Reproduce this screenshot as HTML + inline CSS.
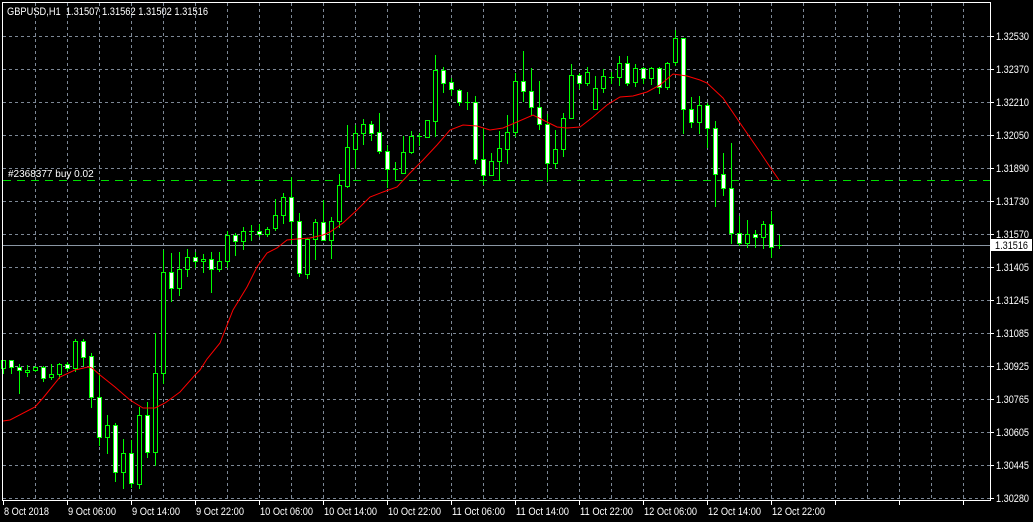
<!DOCTYPE html>
<html><head><meta charset="utf-8"><style>
html,body{margin:0;padding:0;background:#000;width:1033px;height:522px;overflow:hidden}
svg{position:absolute;left:0;top:0}
text{font-family:"Liberation Sans",sans-serif;font-size:11px;fill:#fff}
</style></head><body>
<svg id="s" width="1033" height="522" xmlns="http://www.w3.org/2000/svg" shape-rendering="crispEdges">
<g id="grid"></g>
<line x1="3" y1="180.5" x2="990" y2="180.5" stroke="#00e000" stroke-dasharray="8,6"/>
<text x="8" y="177" style="font-size:10px">#2368377 buy 0.02</text>
<line x1="3" y1="245.5" x2="990" y2="245.5" stroke="#8a96a3"/>
<g id="cand"></g>
<polyline id="ma" fill="none" stroke="#ff0000" stroke-width="1" shape-rendering="auto"/>
<line x1="2.5" y1="2" x2="2.5" y2="501" stroke="#fff"/>
<line x1="2" y1="2.5" x2="990" y2="2.5" stroke="#fff"/>
<line x1="990.5" y1="2" x2="990.5" y2="501" stroke="#fff"/>
<line x1="2" y1="500.5" x2="991" y2="500.5" stroke="#fff"/>
<g id="ticks"></g>
<text x="7" y="15" textLength="201" lengthAdjust="spacingAndGlyphs">GBPUSD,H1&#160; 1.31507 1.31562 1.31502 1.31516</text>
<g id="ra">
<text x="996" y="40">1.32530</text>
<text x="996" y="73">1.32370</text>
<text x="996" y="106">1.32210</text>
<text x="996" y="139">1.32050</text>
<text x="996" y="172">1.31890</text>
<text x="996" y="205">1.31730</text>
<text x="996" y="238">1.31570</text>
<rect x="991" y="239" width="41" height="12" fill="#fff"/>
<text x="995" y="249" style="fill:#000">1.31516</text>
<text x="996" y="271">1.31405</text>
<text x="996" y="304">1.31245</text>
<text x="996" y="337">1.31085</text>
<text x="996" y="370">1.30925</text>
<text x="996" y="403">1.30765</text>
<text x="996" y="436">1.30605</text>
<text x="996" y="469">1.30445</text>
<text x="996" y="502">1.30280</text>
</g>
<text x="4" y="515" textLength="45" lengthAdjust="spacingAndGlyphs">8 Oct 2018</text>
<text x="68" y="515" textLength="48" lengthAdjust="spacingAndGlyphs">9 Oct 06:00</text>
<text x="132" y="515" textLength="48" lengthAdjust="spacingAndGlyphs">9 Oct 14:00</text>
<text x="196" y="515" textLength="48" lengthAdjust="spacingAndGlyphs">9 Oct 22:00</text>
<text x="260" y="515" textLength="53" lengthAdjust="spacingAndGlyphs">10 Oct 06:00</text>
<text x="324" y="515" textLength="53" lengthAdjust="spacingAndGlyphs">10 Oct 14:00</text>
<text x="388" y="515" textLength="53" lengthAdjust="spacingAndGlyphs">10 Oct 22:00</text>
<text x="452" y="515" textLength="53" lengthAdjust="spacingAndGlyphs">11 Oct 06:00</text>
<text x="516" y="515" textLength="53" lengthAdjust="spacingAndGlyphs">11 Oct 14:00</text>
<text x="580" y="515" textLength="53" lengthAdjust="spacingAndGlyphs">11 Oct 22:00</text>
<text x="644" y="515" textLength="53" lengthAdjust="spacingAndGlyphs">12 Oct 06:00</text>
<text x="708" y="515" textLength="53" lengthAdjust="spacingAndGlyphs">12 Oct 14:00</text>
<text x="772" y="515" textLength="53" lengthAdjust="spacingAndGlyphs">12 Oct 22:00</text>
</svg>
<script>
var NS="http://www.w3.org/2000/svg";
function el(p,t,a){var e=document.createElementNS(NS,t);for(var k in a)e.setAttribute(k,a[k]);p.appendChild(e);return e;}
var ra=document.getElementById('ra').getElementsByTagName('text');
for(var i=0;i<ra.length;i++){ra[i].setAttribute('textLength','33');ra[i].setAttribute('lengthAdjust','spacingAndGlyphs');}
var g=document.getElementById('grid');
for(var x=35;x<990;x+=32)el(g,'line',{x1:x+.5,y1:3,x2:x+.5,y2:500,stroke:'#7d8896','stroke-dasharray':'3,3'});
for(var y=36;y<500;y+=33)el(g,'line',{x1:3,y1:y+.5,x2:990,y2:y+.5,stroke:'#7d8896','stroke-dasharray':'3,3'});
var tk=document.getElementById('ticks');
for(var y=36;y<500;y+=33)el(tk,'line',{x1:991,y1:y+.5,x2:994,y2:y+.5,stroke:'#fff'});
for(var x=3;x<990;x+=64)el(tk,'line',{x1:x+.5,y1:501,x2:x+.5,y2:505,stroke:'#fff'});
var D=[
[360,373,360,368,'b'],[360,373,360,367,'w'],[364,393,367,370,'w'],[365,376,370,372,'b'],[366,371,367,370,'b'],
[366,381,367,378,'w'],[364,379,374,377,'b'],[363,378,364,374,'b'],[362,370,364,368,'w'],[339,371,341,368,'b'],
[339,365,341,357,'w'],[353,407,356,397,'w'],[373,445,397,437,'w'],[415,453,425,437,'b'],[423,481,425,472,'w'],
[439,488,453,472,'b'],[440,487,453,483,'w'],[407,488,415,484,'b'],[402,457,415,452,'w'],[333,465,373,452,'b'],
[250,383,272,373,'b'],[253,301,272,288,'w'],[252,295,269,288,'b'],[249,276,257,269,'b'],[252,267,257,261,'w'],
[254,272,259,261,'b'],[252,292,259,269,'w'],[252,271,261,269,'b'],[231,267,235,261,'b'],[233,255,235,241,'w'],
[227,249,231,241,'b'],[225,240,231,231,'d'],[224,236,231,234,'w'],[227,236,229,234,'b'],[199,230,215,228,'b'],
[193,223,197,215,'b'],[177,243,197,221,'w'],[213,276,221,273,'w'],[238,278,239,274,'b'],[219,259,222,239,'b'],
[200,240,222,240,'w'],[217,258,221,240,'b'],[174,227,185,221,'b'],[125,187,147,186,'b'],[125,168,133,149,'b'],
[119,144,124,133,'b'],[121,140,124,133,'w'],[113,153,132,151,'w'],[145,187,151,169,'w'],[162,179,169,169,'d'],
[136,173,152,173,'b'],[131,153,136,152,'b'],[133,145,136,136,'d'],[120,137,120,137,'b'],[55,136,70,121,'b'],
[67,92,70,83,'w'],[78,95,82,89,'w'],[89,105,90,102,'w'],[92,109,102,102,'d'],[96,163,102,159,'w'],
[128,184,159,175,'w'],[153,175,161,175,'b'],[131,180,148,161,'b'],[115,163,132,149,'b'],[73,136,81,132,'b'],
[51,101,81,91,'w'],[68,115,91,107,'w'],[81,129,107,124,'w'],[114,181,124,163,'w'],[130,168,149,163,'b'],
[113,156,118,149,'b'],[64,118,75,118,'b'],[73,88,75,83,'w'],[67,85,72,83,'b'],[76,109,88,109,'b'],
[69,92,76,88,'b'],[72,83,77,77,'d'],[56,85,63,77,'b'],[56,85,63,83,'w'],[64,86,68,82,'b'],
[67,83,68,78,'w'],[67,84,68,78,'b'],[67,93,68,87,'w'],[62,89,63,87,'b'],[30,65,38,62,'b'],
[38,133,38,109,'w'],[97,127,109,122,'w'],[96,133,105,122,'b'],[103,147,105,128,'w'],[121,206,128,174,'w'],
[153,195,174,188,'w'],[143,243,188,233,'w'],[216,245,233,243,'w'],[220,247,234,243,'b'],[230,247,234,237,'w'],
[221,248,224,237,'b'],[211,257,224,247,'w'],[235,248,245,246,'d']];
var c=document.getElementById('cand');
D.forEach(function(d,k){var cx=3+8*k;
 el(c,'line',{x1:cx+.5,y1:d[0],x2:cx+.5,y2:d[1]+1,stroke:'#00ff00'});
 if(d[4]=='d'||d[3]-d[2]<1){el(c,'line',{x1:cx-2,y1:d[2]+.5,x2:cx+3,y2:d[2]+.5,stroke:'#00ff00'});}
 else el(c,'rect',{x:cx-1.5,y:d[2]+.5,width:4,height:d[3]-d[2],fill:d[4]=='w'?'#fff':'#000',stroke:'#00ff00'});
});
var M=[[3,421],[10,420],[35,407],[43,398],[60,377],[75,370],[88,367],[92,368],[100,375],[115,387],[130,400],[143,408],[155,408],[165,403],[180,392],[195,375],[200,370],[207,359],[220,343],[233,310],[247,287],[257,267],[267,253],[277,248],[287,240],[297,239],[310,238],[323,235],[330,232],[343,223],[357,210],[370,197],[383,192],[397,187],[410,173],[423,160],[437,145],[450,130],[463,125],[477,126],[490,130],[503,128],[517,122],[533,115],[543,120],[557,127],[567,128],[580,127],[593,117],[607,105],[620,97],[633,96],[647,92],[660,85],[673,74],[687,76],[700,80],[707,83],[723,98],[740,123],[760,152],[770,167],[779,180]];
document.getElementById('ma').setAttribute('points',M.map(function(p){return p.join(',')}).join(' '));
</script>
</body></html>
